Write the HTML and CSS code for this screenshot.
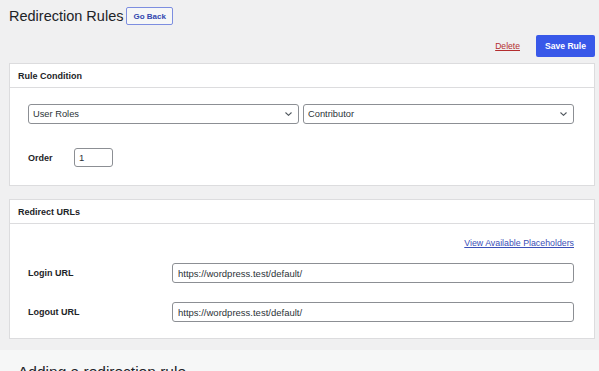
FILE: index.html
```html
<!DOCTYPE html>
<html lang="en">
<head>
    <meta charset="UTF-8">
    <meta name="viewport" content="width=device-width, initial-scale=1.0">
    <title>Redirection Rules</title>
    <link rel="stylesheet" href="styles.css">
</head>
<body>
    <div class="wrap">
        <div class="title-row">
            <h1>Redirection Rules</h1>
            <a href="#" class="back-button">Go Back</a>
        </div>

        <div class="actions">
            <a href="#" class="delete-link">Delete</a>
            <button class="save-button">Save Rule</button>
        </div>

        <!-- 规则条件 -->
        <div class="panel">
            <div class="panel-head">Rule Condition</div>
            <div class="panel-body">
                <div class="select-row">
                    <div class="select-wrap">
                        <select class="select">
                            <option>User Roles</option>
                        </select>
                        <svg class="chevron" width="7" height="4" viewBox="0 0 7 4" fill="none" stroke="currentColor" stroke-width="1.1">
                            <path d="M0.5 0.5L3.5 3.3L6.5 0.5"></path>
                        </svg>
                    </div>
                    <div class="select-wrap">
                        <select class="select">
                            <option>Contributor</option>
                        </select>
                        <svg class="chevron" width="7" height="4" viewBox="0 0 7 4" fill="none" stroke="currentColor" stroke-width="1.1">
                            <path d="M0.5 0.5L3.5 3.3L6.5 0.5"></path>
                        </svg>
                    </div>
                </div>
                <div class="field-row order-row">
                    <label class="field-label order-label">Order</label>
                    <input type="text" class="order-input" value="1">
                </div>
            </div>
        </div>

        <!-- 跳转地址 -->
        <div class="panel panel-urls">
            <div class="panel-head">Redirect URLs</div>
            <div class="panel-body">
                <div class="link-row">
                    <a href="#" class="placeholder-link">View Available Placeholders</a>
                </div>
                <div class="field-row url-row">
                    <label class="field-label">Login URL</label>
                    <input type="text" class="url-input" value="https://wordpress.test/default/">
                </div>
                <div class="field-row url-row logout-row">
                    <label class="field-label">Logout URL</label>
                    <input type="text" class="url-input" value="https://wordpress.test/default/">
                </div>
            </div>
        </div>
    </div>

    <div class="help">
        <h2>Adding a redirection rule</h2>
    </div>
</body>
</html>
```

FILE: styles.css
```css
body {
    margin: 0;
    padding: 0;
    font-family: "Liberation Sans", Arial, sans-serif;
    background-color: #f0f0f1;
    color: #1d2327;
    font-size: 9px;
    overflow: hidden;
}

.wrap {
    padding: 7px 4px 0 9px;
}

.title-row {
    display: flex;
    align-items: center;
    gap: 3px;
    height: 18px;
}

.title-row h1 {
    margin: 0;
    font-size: 14.5px;
    font-weight: 400;
    line-height: 18px;
}

.back-button {
    display: flex;
    align-items: center;
    height: 16px;
    padding: 0 6px;
    border: 1px solid #7d8ee0;
    border-radius: 2px;
    background-color: #f6f7f7;
    color: #3347b0;
    font-size: 8px;
    font-weight: 700;
    text-decoration: none;
}

.actions {
    display: flex;
    justify-content: flex-end;
    align-items: center;
    gap: 16px;
    margin-top: 10px;
}

.delete-link {
    color: #b32d2e;
    font-size: 8.6px;
    text-decoration: underline;
}

.save-button {
    height: 22px;
    width: 59px;
    border: none;
    border-radius: 2px;
    background-color: #3858e9;
    color: #ffffff;
    font-family: inherit;
    font-size: 8.6px;
    font-weight: 700;
    padding: 0;
}

/* 面板 */
.panel {
    margin-top: 6px;
    background-color: #ffffff;
    border: 1px solid #dcdcde;
}

.panel-urls {
    margin-top: 13px;
}

.panel-head {
    height: 23px;
    display: flex;
    align-items: center;
    padding: 0 8px;
    border-bottom: 1px solid #dcdcde;
    font-weight: 700;
}

.panel-body {
    padding: 16px 20px 18px 18px;
}

.panel-urls .panel-body {
    padding-top: 14px;
    padding-bottom: 16px;
}

.select-row {
    display: flex;
    gap: 4px;
}

.select-wrap {
    position: relative;
    flex: 1;
}

.select {
    display: block;
    width: 100%;
    height: 20px;
    appearance: none;
    -webkit-appearance: none;
    border: 1px solid #8c8f94;
    border-radius: 3px;
    background-color: #ffffff;
    color: #2c3338;
    font-family: inherit;
    font-size: 9.3px;
    padding: 0 20px 0 4px;
    margin: 0;
}

.chevron {
    position: absolute;
    right: 7px;
    top: 8px;
    color: #50575e;
    pointer-events: none;
}

.field-row {
    display: flex;
    align-items: center;
}

.order-row {
    margin-top: 24px;
}

.field-label {
    width: 144px;
    font-weight: 700;
}

.order-label {
    width: 46px;
}

.order-input,
.url-input {
    box-sizing: border-box;
    border: 1px solid #8c8f94;
    border-radius: 3px;
    font-family: inherit;
    font-size: 9.5px;
    color: #2c3338;
    margin: 0;
}

.order-input {
    width: 39px;
    height: 19px;
    padding: 0 4px;
}

.url-input {
    flex: 1;
    height: 20px;
    padding: 0 5px;
}

.link-row {
    display: flex;
    justify-content: flex-end;
    line-height: 11px;
}

.placeholder-link {
    color: #3a4fb8;
    font-size: 8.8px;
    text-decoration: underline;
}

.url-row {
    margin-top: 14px;
}

.logout-row {
    margin-top: 19px;
}

/* 帮助说明 */
.help {
    margin-top: 11px;
    background-color: #f6f7f7;
    padding: 12px 18px;
    height: 60px;
}

.help h2 {
    margin: 0;
    font-size: 15.5px;
    font-weight: 300;
    line-height: 20px;
}
```
